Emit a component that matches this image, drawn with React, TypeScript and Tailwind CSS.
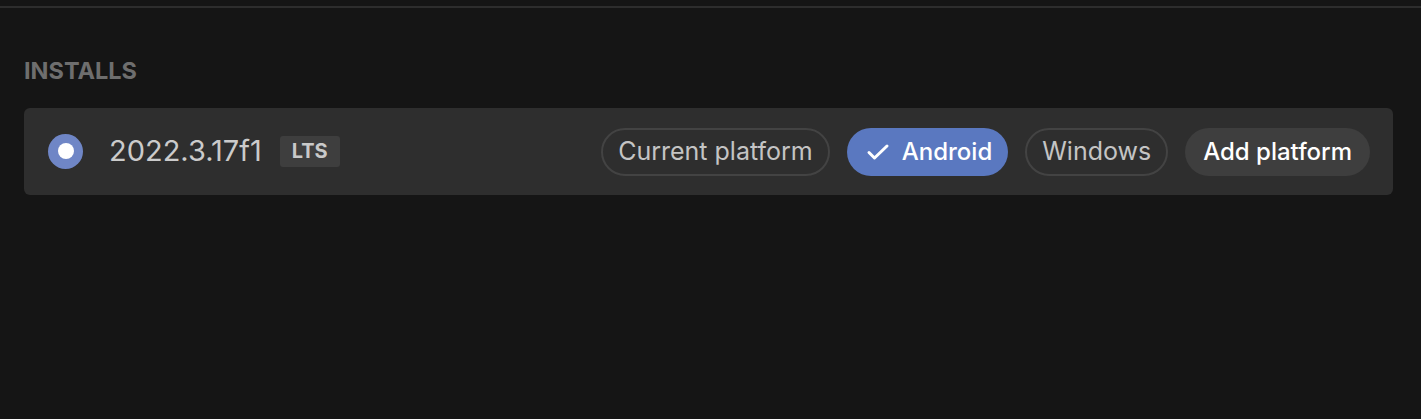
import React from 'react';

const platforms = [
  { name: 'Current platform', selected: false },
  { name: 'Android', selected: true },
  { name: 'Windows', selected: false },
];

export default function App() {
  return (
    <div className="h-[419px] w-full bg-[#151515] font-['Inter',sans-serif]">
      <div className="h-[6px]" />
      <div className="h-[2px] bg-[#2d2d2d]" />
      <div className="pl-6 pr-[28px] pt-[51px]">
        <h2 className="text-[23.5px] font-bold leading-none text-[#6e6e6e]">INSTALLS</h2>

        <div className="mt-[25px] flex h-[87px] items-center rounded-md bg-[#2e2e2e] pl-6 pr-[23px]">
          {/* radio */}
          <div className="flex h-[35px] w-[35px] items-center justify-center rounded-full bg-[#6f86c6]">
            <div className="h-[16px] w-[16px] rounded-full bg-white" />
          </div>
          <span className="ml-[26px] text-[29px] text-[#cbcbcb]">2022.3.17f1</span>
          <span className="ml-[18px] rounded-[3px] bg-[#3e3e3e] px-[12px] py-[5px] text-[20px] font-bold leading-[21px] text-[#c9c9c9]">
            LTS
          </span>

          <div className="ml-auto flex items-center gap-[17px] pt-[2px]">
            {platforms.map((p) =>
              p.selected ? (
                <button
                  key={p.name}
                  className="flex h-[48px] items-center gap-[12px] rounded-full bg-[#5a78c0] pl-[19px] pr-[16px] text-[24px] font-medium text-white"
                >
                  <svg width="24" height="24" viewBox="0 0 24 24" fill="none" stroke="white" strokeWidth="3" strokeLinecap="round" strokeLinejoin="round">
                    <path d="M3 12.5l5.5 5.5L21 6" />
                  </svg>
                  {p.name}
                </button>
              ) : (
                <button
                  key={p.name}
                  className="flex h-[48px] items-center rounded-full border-2 border-[#434343] px-[15px] text-[25px] text-[#c4c4c4]"
                >
                  {p.name}
                </button>
              )
            )}
            <button className="flex h-[48px] items-center rounded-full bg-[#3e3e3e] px-[18px] text-[24px] font-medium text-white">
              Add platform
            </button>
          </div>
        </div>
      </div>
    </div>
  );
}
